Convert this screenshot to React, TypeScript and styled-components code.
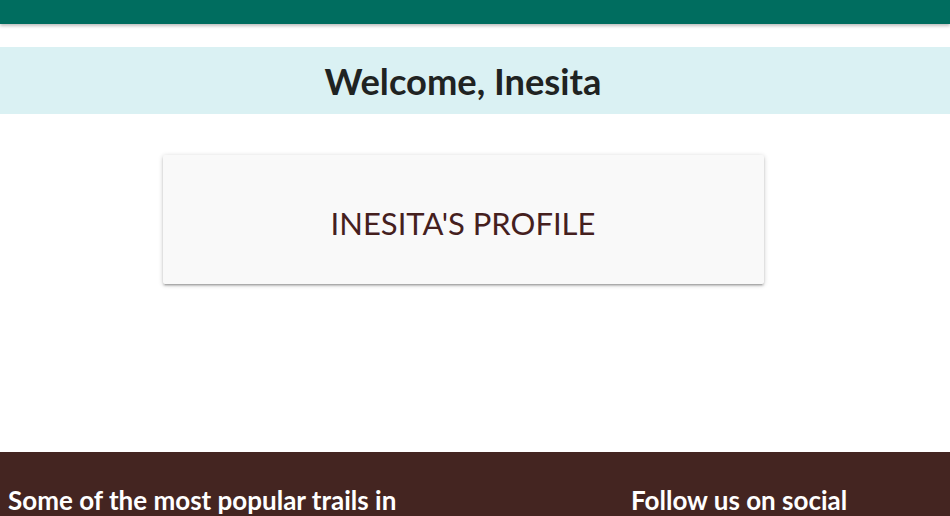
import React from "react";
import styled, { createGlobalStyle } from "styled-components";

const Global = createGlobalStyle`
  html, body { margin: 0; padding: 0; background: #ffffff; }
  body { font-family: Lato, "Open Sans", sans-serif; overflow: hidden; }
  * { box-sizing: border-box; }
`;

const Page = styled.div`
  display: flex;
  flex-direction: column;
  height: 516px;
  overflow: hidden;
`;

const TopBar = styled.header`
  flex: none;
  height: 24px;
  background: #006d5f;
  box-shadow: 0 2px 3px rgba(0, 0, 0, 0.25);
`;

const Banner = styled.section`
  flex: none;
  margin-top: 23px;
  height: 67px;
  background: #daf1f3;
  display: flex;
  align-items: center;
  justify-content: center;
  padding-right: 24px;
`;

const Welcome = styled.h1`
  margin: 0;
  font-family: Lato, sans-serif;
  font-weight: 700;
  font-size: 36.3px;
  color: #1f2322;
`;

const Main = styled.main`
  flex: none;
  display: flex;
  justify-content: center;
  align-items: flex-start;
  padding: 41px 24px 0 0;
  height: 338px;
`;

const Card = styled.div`
  width: 601px;
  height: 129px;
  background: #f9f9f9;
  border-radius: 2px;
  box-shadow: 0 2px 2px 0 rgba(0, 0, 0, 0.14), 0 3px 1px -2px rgba(0, 0, 0, 0.12),
    0 1px 5px 0 rgba(0, 0, 0, 0.2);
  display: flex;
  align-items: center;
  justify-content: center;
  padding-top: 6px;
`;

const CardTitle = styled.h2`
  margin: 0;
  font-family: Lato, sans-serif;
  font-weight: 400;
  font-size: 31px;
  color: #45201e;
`;

const Footer = styled.footer`
  flex: 1;
  min-height: 0;
  overflow: hidden;
  background: #442521;
  display: grid;
  grid-template-columns: 623px 1fr;
  align-items: start;
  padding: 32px 8px 0;
`;

const FooterHeading = styled.h3`
  margin: 0;
  font-family: Lato, sans-serif;
  font-weight: 700;
  font-size: 26px;
  line-height: 32px;
  color: #ffffff;
`;

export default function App() {
  return (
    <Page>
      <Global />
      <TopBar />
      <Banner>
        <Welcome>Welcome, Inesita</Welcome>
      </Banner>
      <Main>
        <Card>
          <CardTitle>INESITA'S PROFILE</CardTitle>
        </Card>
      </Main>
      <Footer>
        <FooterHeading>Some of the most popular trails in</FooterHeading>
        <FooterHeading>Follow us on social</FooterHeading>
      </Footer>
    </Page>
  );
}
